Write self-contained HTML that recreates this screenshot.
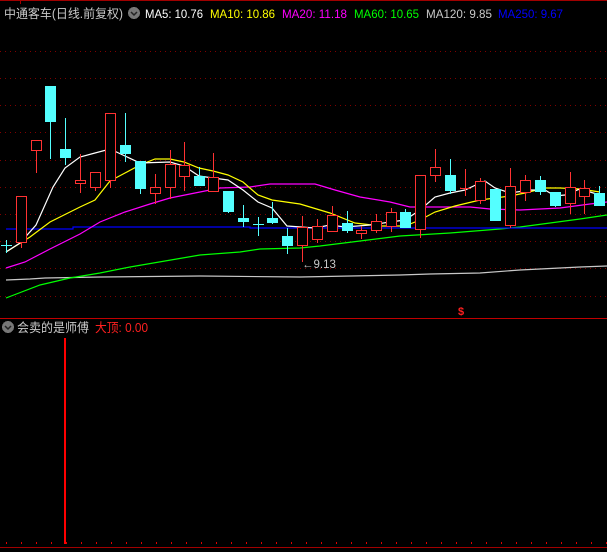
<!DOCTYPE html>
<html><head><meta charset="utf-8"><style>
html,body{margin:0;padding:0;background:#000;}
svg{display:block}
text{font-family:"Liberation Sans","Noto Sans CJK SC",sans-serif;}
</style></head><body>
<svg width="607" height="552" viewBox="0 0 607 552" xmlns="http://www.w3.org/2000/svg" shape-rendering="crispEdges">
<rect width="607" height="552" fill="#000"/>
<line x1="0" y1="0.5" x2="607" y2="0.5" stroke="#a00000"/>
<line x1="20.5" y1="0" x2="20.5" y2="4" stroke="#a00000"/>
<g stroke="#800000" stroke-dasharray="1 4">
<line x1="0" y1="51.5" x2="607" y2="51.5"/><line x1="0" y1="78.5" x2="607" y2="78.5"/>
<line x1="0" y1="105.5" x2="607" y2="105.5"/><line x1="0" y1="132.5" x2="607" y2="132.5"/>
<line x1="0" y1="160.5" x2="607" y2="160.5"/><line x1="0" y1="187.5" x2="607" y2="187.5"/>
<line x1="0" y1="214.5" x2="607" y2="214.5"/><line x1="0" y1="241.5" x2="607" y2="241.5"/>
<line x1="0" y1="268.5" x2="607" y2="268.5"/><line x1="0" y1="296.5" x2="607" y2="296.5"/>
</g>
<line x1="0" y1="318.5" x2="607" y2="318.5" stroke="#c00000"/>
<line x1="0" y1="547.5" x2="607" y2="547.5" stroke="#a00000"/>
<g stroke="#e00000" stroke-dasharray="1 14" stroke-width="2"><line x1="6" y1="543" x2="607" y2="543"/></g>
<text x="4" y="18" font-size="12.5" fill="#c8c8c8" textLength="119" lengthAdjust="spacingAndGlyphs">中通客车(日线.前复权)</text>
<circle cx="134" cy="13" r="6" fill="#777"/>
<path d="M131 12 l3 3 l3 -3" stroke="#222" fill="none" stroke-width="1.5" shape-rendering="auto"/>
<text x="145" y="18" font-size="12" fill="#fff" textLength="58" lengthAdjust="spacingAndGlyphs">MA5: 10.76</text>
<text x="210" y="18" font-size="12" fill="#ffff00" textLength="65" lengthAdjust="spacingAndGlyphs">MA10: 10.86</text>
<text x="282" y="18" font-size="12" fill="#ff00ff" textLength="65" lengthAdjust="spacingAndGlyphs">MA20: 11.18</text>
<text x="354" y="18" font-size="12" fill="#00ff00" textLength="65" lengthAdjust="spacingAndGlyphs">MA60: 10.65</text>
<text x="426" y="18" font-size="12" fill="#c8c8c8" textLength="66" lengthAdjust="spacingAndGlyphs">MA120: 9.85</text>
<text x="498" y="18" font-size="12" fill="#0000ff" textLength="65" lengthAdjust="spacingAndGlyphs">MA250: 9.67</text>
<g fill="none" shape-rendering="auto" stroke-width="1.2">
<polyline stroke="#c8c8c8" points="6,280 30,279 45,278 100,277 200,276 300,277 400,275 430,274 480,273 520,270 580,267 607,266"/>
<polyline stroke="#00ff00" points="6,298 40,285 70,278 100,273 130,267 200,255 240,252 260,249 300,248 320,246 360,241 400,236 450,233 500,229 520,227 550,223 580,219 607,215"/>
<polyline stroke="#0000ff" points="6,229 73,229 73,227 250,227 250,228 607,228"/>
<polyline stroke="#ff00ff" points="6,268 25,262 50,249 80,234 100,222 125,212 150,204 170,198 200,192 220,188 250,187 270,184 315,184 335,190 360,197 390,202 410,207 470,207 490,209 520,210 560,208 590,204 607,202"/>
<polyline stroke="#ffff00" points="6,252 30,237 50,222 80,207 95,200 110,181 125,173 140,165 155,159 170,159 184,162 199,168 213,171 228,175 243,182 258,195 272,200 300,204 330,213 355,223 380,226 405,226 420,220 435,212 455,206 480,200 510,196 525,193 545,188 560,188 580,189 600,192"/>
<polyline stroke="#ffffff" points="6,252 20,243 36,225 53,187 65,168 80,157 95,153 110,149 125,156 140,163 170,162 184,166 199,176 213,178 228,180 243,190 258,202 272,208 287,226 315,228 330,225 345,227 370,225 390,222 405,220 420,210 435,197 450,193 465,190 480,183 485,181 495,188 510,193 530,190 545,190 555,196 565,195 580,189 600,195"/>
</g>
<g stroke="#ff3232" fill="#000">
<line x1="21.5" y1="242" x2="21.5" y2="248"/><rect x="16.5" y="196.5" width="10" height="46"/>
<line x1="36.5" y1="150" x2="36.5" y2="173"/><rect x="31.5" y="140.5" width="10" height="10"/>
<line x1="80.5" y1="154" x2="80.5" y2="193"/><rect x="75.5" y="180.5" width="10" height="3"/>
<line x1="95.5" y1="187" x2="95.5" y2="191"/><rect x="90.5" y="172.5" width="10" height="15"/>
<line x1="110.5" y1="180" x2="110.5" y2="188"/><rect x="105.5" y="113.5" width="10" height="67"/>
<line x1="155.5" y1="174" x2="155.5" y2="204"/><rect x="150.5" y="187.5" width="10" height="6"/>
<line x1="170.5" y1="150" x2="170.5" y2="199"/><rect x="165.5" y="164.5" width="10" height="23"/>
<line x1="184.5" y1="142" x2="184.5" y2="191"/><rect x="179.5" y="165.5" width="10" height="11"/>
<line x1="213.5" y1="153" x2="213.5" y2="192"/><rect x="208.5" y="177.5" width="10" height="14"/>
<line x1="302.5" y1="216" x2="302.5" y2="262"/><rect x="297.5" y="227.5" width="10" height="18"/>
<line x1="317.5" y1="219" x2="317.5" y2="243"/><rect x="312.5" y="226.5" width="10" height="13"/>
<line x1="332.5" y1="206" x2="332.5" y2="232"/><rect x="327.5" y="215.5" width="10" height="16"/>
<line x1="361.5" y1="226" x2="361.5" y2="239"/><rect x="356.5" y="230.5" width="10" height="3"/>
<line x1="376.5" y1="214" x2="376.5" y2="233"/><rect x="371.5" y="221.5" width="10" height="9"/>
<line x1="391.5" y1="208" x2="391.5" y2="232"/><rect x="386.5" y="212.5" width="10" height="14"/>
<line x1="420.5" y1="229" x2="420.5" y2="238"/><rect x="415.5" y="175.5" width="10" height="54"/>
<line x1="435.5" y1="149" x2="435.5" y2="182"/><rect x="430.5" y="167.5" width="10" height="8"/>
<line x1="465.5" y1="169" x2="465.5" y2="196"/><line x1="460" y1="188.5" x2="471" y2="188.5"/>
<line x1="480.5" y1="178" x2="480.5" y2="204"/><rect x="475.5" y="181.5" width="10" height="19"/>
<line x1="510.5" y1="168" x2="510.5" y2="228"/><rect x="505.5" y="186.5" width="10" height="39"/>
<line x1="525.5" y1="175" x2="525.5" y2="201"/><rect x="520.5" y="180.5" width="10" height="12"/>
<line x1="570.5" y1="172" x2="570.5" y2="214"/><rect x="565.5" y="187.5" width="10" height="16"/>
<line x1="584.5" y1="180" x2="584.5" y2="214"/><rect x="579.5" y="188.5" width="10" height="8"/>
</g>
<g stroke="#54ffff" fill="#54ffff">
<line x1="6.5" y1="240" x2="6.5" y2="253"/><line x1="1" y1="245.5" x2="12" y2="245.5"/>
<line x1="50.5" y1="86" x2="50.5" y2="159"/><rect x="45.5" y="86.5" width="10" height="35"/>
<line x1="65.5" y1="118" x2="65.5" y2="165"/><rect x="60.5" y="149.5" width="10" height="8"/>
<line x1="125.5" y1="113" x2="125.5" y2="162"/><rect x="120.5" y="145.5" width="10" height="8"/>
<line x1="140.5" y1="161" x2="140.5" y2="194"/><rect x="135.5" y="161.5" width="10" height="27"/>
<line x1="199.5" y1="167" x2="199.5" y2="186"/><rect x="194.5" y="176.5" width="10" height="9"/>
<line x1="228.5" y1="191" x2="228.5" y2="213"/><rect x="223.5" y="191.5" width="10" height="20"/>
<line x1="243.5" y1="205" x2="243.5" y2="227"/><rect x="238.5" y="218.5" width="10" height="3"/>
<line x1="258.5" y1="217" x2="258.5" y2="236"/><line x1="253" y1="224.5" x2="264" y2="224.5"/>
<line x1="272.5" y1="202" x2="272.5" y2="224"/><rect x="267.5" y="218.5" width="10" height="4"/>
<line x1="287.5" y1="228" x2="287.5" y2="254"/><rect x="282.5" y="236.5" width="10" height="9"/>
<line x1="347.5" y1="211" x2="347.5" y2="233"/><rect x="342.5" y="223.5" width="10" height="7"/>
<line x1="405.5" y1="209" x2="405.5" y2="228"/><rect x="400.5" y="212.5" width="10" height="15"/>
<line x1="450.5" y1="159" x2="450.5" y2="194"/><rect x="445.5" y="175.5" width="10" height="15"/>
<rect x="490.5" y="189.5" width="10" height="31"/>
<line x1="540.5" y1="176" x2="540.5" y2="195"/><rect x="535.5" y="180.5" width="10" height="11"/>
<line x1="555.5" y1="192" x2="555.5" y2="207"/><rect x="550.5" y="192.5" width="10" height="13"/>
<line x1="599.5" y1="186" x2="599.5" y2="206"/><rect x="594.5" y="193.5" width="10" height="12"/>
</g>
<text x="302" y="268" font-size="11.5" fill="#c8c8c8">←9.13</text>
<text x="458" y="315" font-size="11" font-weight="bold" fill="#ff2020">$</text>
<circle cx="8" cy="327" r="6" fill="#777"/>
<path d="M5 326 l3 3 l3 -3" stroke="#222" fill="none" stroke-width="1.5" shape-rendering="auto"/>
<text x="17" y="332" font-size="12.5" fill="#c8c8c8" textLength="72" lengthAdjust="spacingAndGlyphs">会卖的是师傅</text>
<text x="95" y="332" font-size="12.5" fill="#ff2020" textLength="53" lengthAdjust="spacingAndGlyphs">大顶: 0.00</text>
<rect x="64" y="338" width="2" height="206" fill="#ff0000"/>
</svg>
</body></html>
